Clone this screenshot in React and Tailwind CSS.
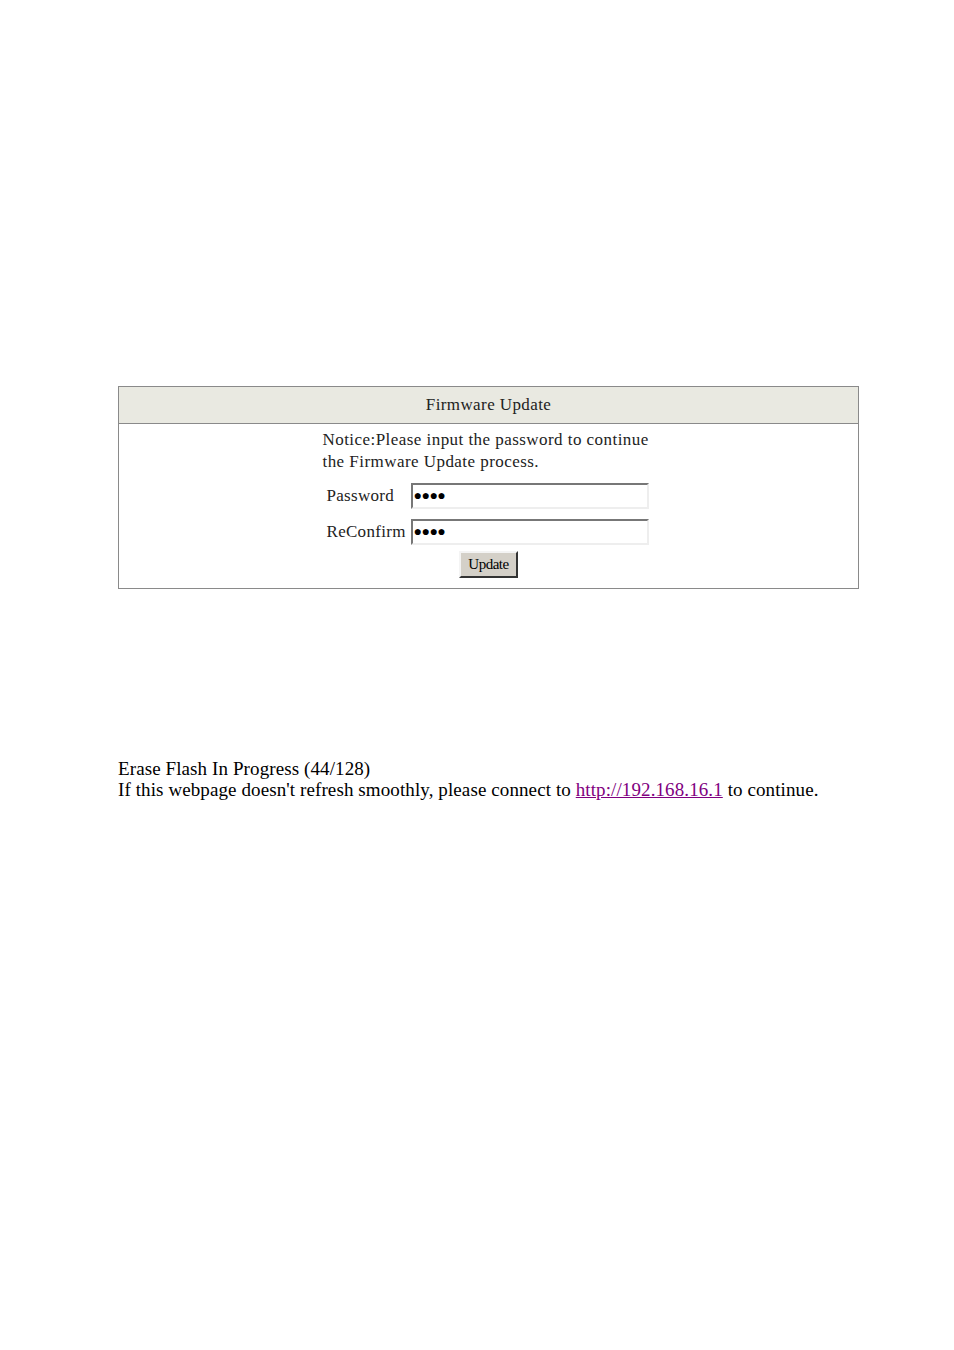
export default function App() {
  return (
    <div
      className="min-h-[1350px] bg-white text-black pt-[386px] px-[118px]"
      style={{ fontFamily: '"Liberation Serif", "Times New Roman", serif' }}
    >
      <div className="w-[741px] border border-[#8a8a8a]">
        <div className="h-[37px] bg-[#e9e9e1] border-b border-[#8a8a8a] flex items-center justify-center text-[17px] tracking-[0.4px] text-[#222]">
          Firmware Update
        </div>
        <div className="flex flex-col items-center pt-[5px] pb-[10px]">
          <div className="w-[330px] ml-[-2px] text-[17px] leading-[22px] tracking-[0.45px] text-[#222]">
            <div>Notice:Please input the password to continue</div>
            <div>the Firmware Update process.</div>
          </div>
          <div className="flex flex-col gap-[10px] mt-[10px] ml-[-4px]">
            <div className="flex items-center">
              <span className="w-[86px] pl-[2px] text-[17px] tracking-[0.3px] text-[#222]">Password</span>
              <div className="w-[238px] h-[26px] border-2 border-t-[#777] border-l-[#777] border-b-[#eee] border-r-[#eee] bg-white flex items-center pl-[1px] text-[14px] tracking-[-0.5px] leading-none">
                ●●●●
              </div>
            </div>
            <div className="flex items-center">
              <span className="w-[86px] pl-[2px] text-[17px] tracking-[0.3px] text-[#222]">ReConfirm</span>
              <div className="w-[238px] h-[26px] border-2 border-t-[#777] border-l-[#777] border-b-[#eee] border-r-[#eee] bg-white flex items-center pl-[1px] text-[14px] tracking-[-0.5px] leading-none">
                ●●●●
              </div>
            </div>
          </div>
          <button className="mt-[6px] w-[59px] h-[27px] bg-[#d4d0c8] border-2 border-t-[#f4f4f4] border-l-[#f4f4f4] border-b-[#333] border-r-[#333] text-[15px] tracking-[-0.5px] text-black">
            Update
          </button>
        </div>
      </div>
      <div className="mt-[169px] text-[19px] leading-[21px] tracking-[0.1px]">
        <div>Erase Flash In Progress (44/128)</div>
        <div>
          If this webpage doesn't refresh smoothly, please connect to{' '}
          <a href="#" className="text-[#800080] underline">http://192.168.16.1</a> to continue.
        </div>
      </div>
    </div>
  )
}
